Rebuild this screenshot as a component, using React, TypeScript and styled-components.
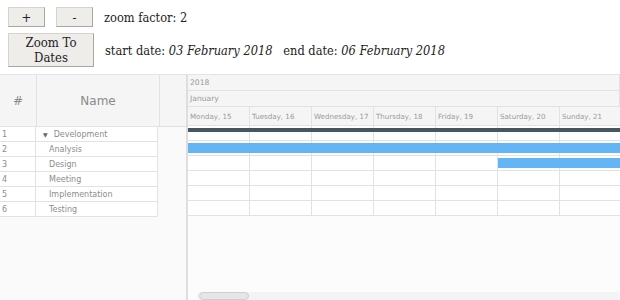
import styled, { createGlobalStyle } from "styled-components";

const GlobalStyle = createGlobalStyle`
  body {
    margin: 0;
    font-family: "DejaVu Serif", serif;
    background: #fff;
  }
`;

const Toolbar = styled.div`
  padding: 7px 8px 0;
  display: flex;
  flex-direction: column;
  gap: 6px;
  height: 67px;
`;

const ToolRow = styled.div`
  display: flex;
  align-items: center;
  gap: 11px;
`;

const Button = styled.button<{ $wide?: boolean }>`
  font-family: "DejaVu Serif Condensed", "DejaVu Serif", serif;
  font-stretch: condensed;
  font-size: 13px;
  line-height: 15px;
  color: #222;
  background: #efedea;
  border: 1px solid #d6d3cf;
  border-right-color: #a9a6a2;
  border-bottom-color: #a9a6a2;
  width: ${(p) => (p.$wide ? "86px" : "37px")};
  height: ${(p) => (p.$wide ? "34px" : "20px")};
  padding: 0;
`;

const Label = styled.span`
  font-family: "DejaVu Serif Condensed", "DejaVu Serif", serif;
  font-stretch: condensed;
  font-size: 12.7px;
  color: #222;
  white-space: pre;
  em {
    font-style: italic;
  }
`;

const Gantt = styled.div`
  display: flex;
  height: 226px;
  border-top: 1px solid #e4e4e4;
  overflow: hidden;
  font-family: "DejaVu Sans", sans-serif;
`;

const GridPanel = styled.div`
  width: 186px;
  flex: none;
  background: #fafafa;
  border-right: 2px solid #dedede;
`;

const GridHeader = styled.div`
  display: flex;
  height: 51px;
  background: #f5f5f5;
  border-bottom: 1px solid #e2e2e2;
`;

const HeadCell = styled.div<{ $w: number }>`
  width: ${(p) => p.$w}px;
  display: flex;
  align-items: center;
  justify-content: center;
  border-right: 1px solid #e2e2e2;
  color: #8a8a8a;
  font-size: 12px;
`;

const GridRow = styled.div`
  display: flex;
  width: 158px;
  height: 15px;
  background: #fff;
  border-bottom: 1px solid #e2e2e2;
  box-sizing: border-box;
`;

const Cell = styled.div<{ $w: number; $pad: number }>`
  width: ${(p) => p.$w}px;
  padding-left: ${(p) => p.$pad}px;
  box-sizing: border-box;
  border-right: 1px solid #e2e2e2;
  display: flex;
  align-items: center;
  font-size: 8px;
  color: #8c8c8c;
  white-space: nowrap;
`;

const Caret = styled.span`
  font-size: 6px;
  margin-right: 6px;
  color: #666;
`;

const Timeline = styled.div`
  flex: 1;
  min-width: 0;
  display: flex;
  flex-direction: column;
  overflow: hidden;
  background: #fcfcfc;
`;

const ScaleRow = styled.div<{ $h: number }>`
  display: flex;
  height: ${(p) => p.$h}px;
  background: #f5f5f5;
  border-bottom: 1px solid #e2e2e2;
  box-sizing: border-box;
  flex: none;
`;

const ScaleCell = styled.div<{ $w?: number }>`
  ${(p) => (p.$w ? `width: ${p.$w}px; flex: none;` : "flex: 1;")}
  box-sizing: border-box;
  border-right: 1px solid #e2e2e2;
  padding-left: 2px;
  display: flex;
  align-items: center;
  font-size: ${(p) => (p.$w ? "7.1px" : "7.6px")};
  color: #9a9a9a;
  white-space: nowrap;
  overflow: hidden;
`;

const TaskRow = styled.div`
  position: relative;
  display: flex;
  height: 15px;
  flex: none;
  background: #fff;
  border-bottom: 1px solid #e2e2e2;
  box-sizing: border-box;
`;

const DayCell = styled.div`
  width: 62px;
  flex: none;
  box-sizing: border-box;
  border-right: 1px solid #e2e2e2;
`;

const Bar = styled.div<{ $parent?: boolean }>`
  position: absolute;
  right: -40px;
  top: 2px;
  height: ${(p) => (p.$parent ? "4px" : "10px")};
  background: ${(p) => (p.$parent ? "#47565f" : "#64b5f6")};
`;

const Spacer = styled.div`
  flex: 1;
`;

const ScrollTrack = styled.div`
  height: 8px;
  margin: 0 0 1px 9px;
  background: #f3f3f3;
  border-radius: 4px;
  flex: none;
  display: flex;
`;

const ScrollThumb = styled.div`
  width: 50px;
  margin-left: 2px;
  background: #e6e6e6;
  border: 1px solid #cfcfcf;
  border-radius: 4px;
  box-sizing: border-box;
`;

const days = [
  "Monday, 15",
  "Tuesday, 16",
  "Wednesday, 17",
  "Thursday, 18",
  "Friday, 19",
  "Saturday, 20",
  "Sunday, 21",
];

type Task = { id: number; name: string; parent?: boolean; start?: number };

const tasks: Task[] = [
  { id: 1, name: "Development", parent: true, start: 0 },
  { id: 2, name: "Analysis", start: 0 },
  { id: 3, name: "Design", start: 5 },
  { id: 4, name: "Meeting" },
  { id: 5, name: "Implementation" },
  { id: 6, name: "Testing" },
];

export default function App() {
  return (
    <>
      <GlobalStyle />
      <Toolbar>
        <ToolRow>
          <Button>+</Button>
          <Button>-</Button>
          <Label>zoom factor: 2</Label>
        </ToolRow>
        <ToolRow>
          <Button $wide>
            Zoom To
            <br />
            Dates
          </Button>
          <Label>
            start date: <em>03 February 2018</em>   end date: <em>06 February 2018</em>
          </Label>
        </ToolRow>
      </Toolbar>
      <Gantt>
        <GridPanel>
          <GridHeader>
            <HeadCell $w={36}>#</HeadCell>
            <HeadCell $w={122}>Name</HeadCell>
          </GridHeader>
          {tasks.map((t) => (
            <GridRow key={t.id}>
              <Cell $w={36} $pad={2}>
                {t.id}
              </Cell>
              <Cell $w={122} $pad={t.parent ? 7 : 13}>
                {t.parent && <Caret>▼</Caret>}
                {t.name}
              </Cell>
            </GridRow>
          ))}
        </GridPanel>
        <Timeline>
          <ScaleRow $h={16}>
            <ScaleCell>2018</ScaleCell>
          </ScaleRow>
          <ScaleRow $h={16}>
            <ScaleCell>January</ScaleCell>
          </ScaleRow>
          <ScaleRow $h={19}>
            {days.map((d) => (
              <ScaleCell key={d} $w={62}>
                {d}
              </ScaleCell>
            ))}
          </ScaleRow>
          {tasks.map((t) => (
            <TaskRow key={t.id}>
              {days.map((d) => (
                <DayCell key={d} />
              ))}
              {t.start !== undefined && (
                <Bar $parent={t.parent} style={{ left: t.start * 62 }} />
              )}
            </TaskRow>
          ))}
          <Spacer />
          <ScrollTrack>
            <ScrollThumb />
          </ScrollTrack>
        </Timeline>
      </Gantt>
    </>
  );
}
